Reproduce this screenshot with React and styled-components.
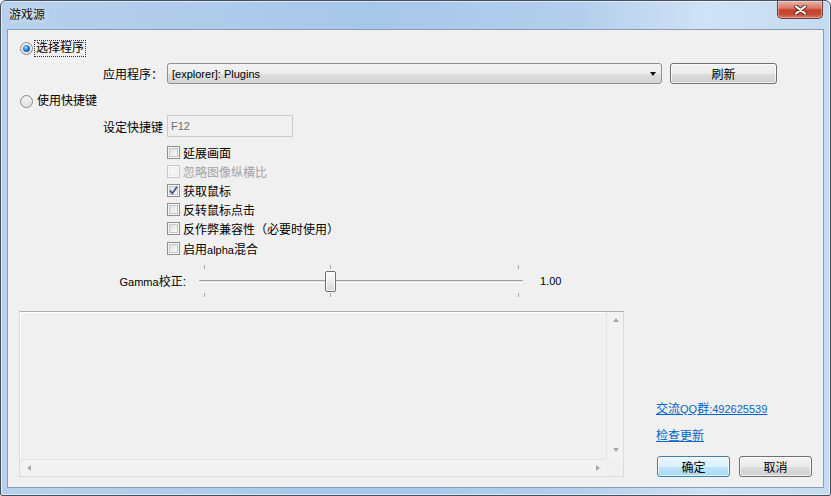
import styled, { createGlobalStyle } from "styled-components";

const GlobalStyle = createGlobalStyle`
  html, body {
    margin: 0;
    padding: 0;
    background: #ffffff;
  }
  * {
    box-sizing: border-box;
  }
`;

const Window = styled.div`
  width: 831px;
  height: 496px;
  border: 1px solid #46505e;
  border-radius: 6px 6px 2px 2px;
  background: linear-gradient(to right, #b7d1ec 0%, #a7c7e9 45%, #b3cfed 70%, #d0e2f5 85%, #c4daf0 100%);
  box-shadow: inset 0 0 0 1px rgba(255, 255, 255, 0.55);
  display: flex;
  flex-direction: column;
  font-family: "Liberation Sans", "Noto Sans CJK SC", sans-serif;
  font-size: 12px;
  color: #000;
  overflow: hidden;
`;

const TitleBar = styled.div`
  height: 28px;
  flex: none;
  display: flex;
  align-items: flex-start;
  justify-content: space-between;
  padding-left: 8px;
`;

const Title = styled.span`
  line-height: 28px;
  color: #111;
  text-shadow: 0 0 6px rgba(255, 255, 255, 0.9);
`;

const CloseButton = styled.div`
  width: 46px;
  height: 18px;
  margin-right: 7px;
  border: 1px solid #6b3b33;
  border-top: none;
  border-radius: 0 0 5px 5px;
  background: linear-gradient(#ebb4a6 0%, #d9786a 42%, #c3432f 52%, #c74a34 78%, #de7a62 100%);
  box-shadow: inset 0 0 0 1px rgba(255, 255, 255, 0.35);
  display: flex;
  align-items: center;
  justify-content: center;
`;

const Client = styled.div`
  flex: 1;
  margin: 0 6px 7px;
  border: 1px solid #8a9cb3;
  background: #f0f0f0;
  display: flex;
  flex-direction: column;
`;

const Row = styled.div`
  display: flex;
  align-items: center;
  flex: none;
  height: ${(p) => p.$h}px;
  margin-top: ${(p) => p.$top}px;
  padding-left: ${(p) => p.$indent}px;
`;

const Radio = styled.span`
  position: relative;
  width: 13px;
  height: 13px;
  flex: none;
  border-radius: 50%;
  border: 1px solid #8b8b8b;
  background: radial-gradient(circle at 50% 40%, #ffffff, #dedede 85%);

  &::after {
    content: "";
    position: absolute;
    inset: 2px;
    border-radius: 50%;
    background: ${(p) =>
      p.$checked
        ? "radial-gradient(circle at 40% 35%, #a9dcff 0%, #2a86d2 40%, #0a3f80 100%)"
        : "radial-gradient(circle at 45% 40%, #f6f6f6, #d5d5d5)"};
  }
`;

const RadioText = styled.span`
  margin-left: ${(p) => (p.$focused ? 1 : 2)}px;
  padding: 0 1px;
  line-height: 15px;
  border: 1px ${(p) => (p.$focused ? "dotted #333" : "solid transparent")};
`;

const FieldLabel = styled.span`
  width: 64px;
  flex: none;
  white-space: nowrap;
`;

const Latin = styled.span`
  font-family: "Liberation Sans", sans-serif;
  font-size: 11px;
`;

const Combo = styled.div`
  width: 495px;
  height: 21px;
  border: 1px solid #8e8f8f;
  border-radius: 3px;
  background: linear-gradient(#f3f3f3 0%, #ececec 50%, #dfdfdf 51%, #d4d4d4 100%);
  display: flex;
  align-items: center;
  justify-content: space-between;
  padding: 0 5px 0 4px;
`;

const Arrow = styled.span`
  width: 0;
  height: 0;
  border-left: 3.5px solid transparent;
  border-right: 3.5px solid transparent;
  border-top: 4px solid #111;
`;

const Button = styled.div`
  width: ${(p) => p.$w}px;
  height: 21px;
  margin-left: ${(p) => p.$gap || 0}px;
  border: 1px solid ${(p) => (p.$default ? "#3c7fb1" : "#707070")};
  border-radius: 3px;
  background: ${(p) =>
    p.$default
      ? "linear-gradient(#eaf6fd 0%, #d9f0fc 50%, #bee6fd 51%, #a7d9f5 100%)"
      : "linear-gradient(#f2f2f2 0%, #ebebeb 50%, #dddddd 51%, #cfcfcf 100%)"};
  box-shadow: inset 0 0 0 1px rgba(255, 255, 255, 0.7);
  display: flex;
  align-items: center;
  justify-content: center;
  flex: none;
`;

const TextBox = styled.div`
  width: 126px;
  height: 22px;
  border: 1px solid #c9cbce;
  background: #f0f0f0;
  color: #6d6d6d;
  display: flex;
  align-items: center;
  padding-left: 3px;
`;

const CheckList = styled.div`
  display: flex;
  flex-direction: column;
  margin-top: 6px;
  padding-left: 159px;
`;

const CheckRow = styled.div`
  height: 19.1px;
  display: flex;
  align-items: center;
  color: ${(p) => (p.$disabled ? "#a3a3a3" : "#000")};
`;

const Box = styled.span`
  width: 13px;
  height: 13px;
  flex: none;
  border: 1px solid ${(p) => (p.$disabled ? "#c6c6c6" : "#8e8f8f")};
  background: ${(p) =>
    p.$disabled ? "#f4f4f4" : "linear-gradient(135deg, #d9d9d9 0%, #f0f0f0 60%, #fbfbfb 100%)"};
  box-shadow: inset 0 0 0 1px ${(p) => (p.$disabled ? "#fafafa" : "#f7f7f7")},
    inset 0 0 0 2px ${(p) => (p.$disabled ? "#ececec" : "#c4c6c9")};
  display: flex;
  align-items: center;
  justify-content: center;
  margin-right: 3px;
`;

const GammaLabel = styled.span`
  width: 78px;
  text-align: right;
  flex: none;
`;

const Slider = styled.div`
  position: relative;
  width: 324px;
  height: 38px;
  margin-left: 13px;
  flex: none;
`;

const Track = styled.div`
  position: absolute;
  left: 0;
  right: 0;
  top: 18px;
  height: 3px;
  border-top: 1px solid #9f9f9f;
  border-bottom: 1px solid #ffffff;
  background: #e3e3e3;
  border-radius: 1px;
`;

const Tick = styled.span`
  position: absolute;
  width: 1px;
  height: 4px;
  background: #a6a6a6;
  left: ${(p) => p.$x}px;
  top: ${(p) => p.$y}px;
`;

const Thumb = styled.div`
  position: absolute;
  left: 126px;
  top: 9px;
  width: 11px;
  height: 21px;
  border: 1px solid #6f6f6f;
  border-radius: 2px;
  background: linear-gradient(#fafafa 0%, #ececec 50%, #d9d9d9 100%);
  box-shadow: inset 0 0 0 1px #ffffff;
`;

const Value = styled.span`
  margin-left: 17px;
`;

const Bottom = styled.div`
  display: flex;
  margin-top: 11px;
  padding-left: 11px;
  height: 166px;
  flex: none;
`;

const ListBox = styled.div`
  width: 605px;
  height: 166px;
  border: 1px solid #dadada;
  border-top-color: #abadb3;
  background: #f0f0f0;
  display: grid;
  grid-template-columns: 1fr 17px;
  grid-template-rows: 1fr 17px;
`;

const ListContent = styled.div`
  box-shadow: inset 1px 1px 0 #ffffff;
`;

const VScroll = styled.div`
  border-left: 1px solid #e3e3e3;
  background: #f2f2f2;
  display: flex;
  flex-direction: column;
  justify-content: space-between;
`;

const HScroll = styled.div`
  border-top: 1px solid #e3e3e3;
  background: #f2f2f2;
  display: flex;
  justify-content: space-between;
`;

const Corner = styled.div`
  background: #f0f0f0;
`;

const ScrollArrow = styled.span`
  width: 17px;
  height: 17px;
  display: flex;
  align-items: center;
  justify-content: center;

  &::before {
    content: "";
    width: 0;
    height: 0;
    ${(p) =>
      p.$dir === "up"
        ? "border-left: 3.5px solid transparent; border-right: 3.5px solid transparent; border-bottom: 4px solid #a8a8a8;"
        : p.$dir === "down"
        ? "border-left: 3.5px solid transparent; border-right: 3.5px solid transparent; border-top: 4px solid #a8a8a8;"
        : p.$dir === "left"
        ? "border-top: 3.5px solid transparent; border-bottom: 3.5px solid transparent; border-right: 4px solid #a8a8a8;"
        : "border-top: 3.5px solid transparent; border-bottom: 3.5px solid transparent; border-left: 4px solid #a8a8a8;"}
  }
`;

const SideColumn = styled.div`
  display: flex;
  flex-direction: column;
  justify-content: flex-end;
  align-items: flex-start;
  margin-left: 32px;
`;

const Link = styled.a`
  color: #0066cc;
  text-decoration: underline;
  line-height: 14px;
  margin-bottom: 13px;
  cursor: pointer;
`;

const ButtonRow = styled.div`
  display: flex;
  margin-left: 1px;
`;

const checks = [
  { text: "延展画面" },
  { text: "忽略图像纵横比", disabled: true },
  { text: "获取鼠标", checked: true },
  { text: "反转鼠标点击" },
  { text: "反作弊兼容性（必要时使用）" },
  { text: ["启用", <Latin key="a">alpha</Latin>, "混合"] },
];

function CheckMark() {
  return (
    <svg width="9" height="9" viewBox="0 0 9 9">
      <path d="M1 4.6 L3.4 7.4 L8 0.8" fill="none" stroke="#3d5291" strokeWidth="1.7" />
    </svg>
  );
}

function CloseGlyph() {
  return (
    <svg width="13" height="10" viewBox="0 0 13 10">
      <path d="M2 1.5 L11 8.5 M11 1.5 L2 8.5" stroke="#5a2b24" strokeWidth="4" strokeLinecap="round" />
      <path d="M2 1.5 L11 8.5 M11 1.5 L2 8.5" stroke="#ffffff" strokeWidth="2.2" strokeLinecap="round" />
    </svg>
  );
}

export default function App() {
  return (
    <>
      <GlobalStyle />
      <Window>
        <TitleBar>
          <Title>游戏源</Title>
          <CloseButton>
            <CloseGlyph />
          </CloseButton>
        </TitleBar>
        <Client>
          <Row $h={18} $top={9} $indent={12}>
            <Radio $checked />
            <RadioText $focused>选择程序</RadioText>
          </Row>
          <Row $h={21} $top={6} $indent={95}>
            <FieldLabel>应用程序：</FieldLabel>
            <Combo>
              <Latin>[explorer]: Plugins</Latin>
              <Arrow />
            </Combo>
            <Button $w={107} $gap={8}>刷新</Button>
          </Row>
          <Row $h={18} $top={8} $indent={12}>
            <Radio />
            <RadioText>使用快捷键</RadioText>
          </Row>
          <Row $h={22} $top={5} $indent={95}>
            <FieldLabel>设定快捷键</FieldLabel>
            <TextBox>
              <Latin>F12</Latin>
            </TextBox>
          </Row>
          <CheckList>
            {checks.map((c, i) => (
              <CheckRow key={i} $disabled={c.disabled}>
                <Box $disabled={c.disabled}>{c.checked && <CheckMark />}</Box>
                <span>{c.text}</span>
              </CheckRow>
            ))}
          </CheckList>
          <Row $h={38} $top={4} $indent={100}>
            <GammaLabel>
              <Latin>Gamma</Latin>校正:
            </GammaLabel>
            <Slider>
              <Tick $x={5} $y={3} />
              <Tick $x={131} $y={3} />
              <Tick $x={319} $y={3} />
              <Track />
              <Tick $x={5} $y={31} />
              <Tick $x={131} $y={31} />
              <Tick $x={319} $y={31} />
              <Thumb />
            </Slider>
            <Value>
              <Latin>1.00</Latin>
            </Value>
          </Row>
          <Bottom>
            <ListBox>
              <ListContent />
              <VScroll>
                <ScrollArrow $dir="up" />
                <ScrollArrow $dir="down" />
              </VScroll>
              <HScroll>
                <ScrollArrow $dir="left" />
                <ScrollArrow $dir="right" />
              </HScroll>
              <Corner />
            </ListBox>
            <SideColumn>
              <Link>
                交流<Latin>QQ</Latin>群<Latin>:492625539</Latin>
              </Link>
              <Link>检查更新</Link>
              <ButtonRow>
                <Button $w={73} $default>确定</Button>
                <Button $w={73} $gap={9}>取消</Button>
              </ButtonRow>
            </SideColumn>
          </Bottom>
        </Client>
      </Window>
    </>
  );
}
